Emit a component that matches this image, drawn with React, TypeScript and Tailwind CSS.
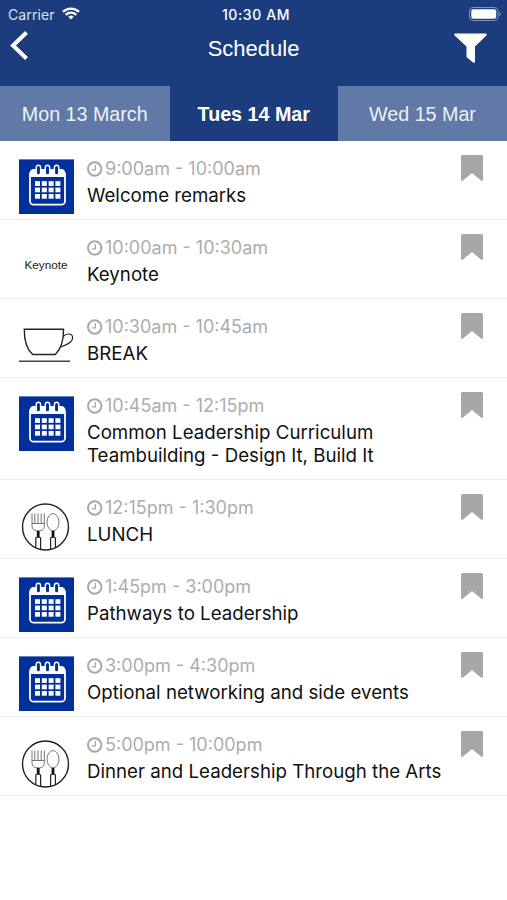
import { useState } from "react";

type IconKind = "calendar" | "keynote" | "cup" | "meal";

interface Session {
  icon: IconKind;
  time: string;
  title: string[];
}

const days = [
  { label: "Mon 13 March", width: "w-[169.5px]" },
  { label: "Tues 14 Mar", width: "w-[168.5px]" },
  { label: "Wed 15 Mar", width: "w-[169px]" },
];

const sessions: Session[] = [
  { icon: "calendar", time: "9:00am - 10:00am", title: ["Welcome remarks"] },
  { icon: "keynote", time: "10:00am - 10:30am", title: ["Keynote"] },
  { icon: "cup", time: "10:30am - 10:45am", title: ["BREAK"] },
  {
    icon: "calendar",
    time: "10:45am - 12:15pm",
    title: ["Common Leadership Curriculum", "Teambuilding - Design It, Build It"],
  },
  { icon: "meal", time: "12:15pm - 1:30pm", title: ["LUNCH"] },
  { icon: "calendar", time: "1:45pm - 3:00pm", title: ["Pathways to Leadership"] },
  { icon: "calendar", time: "3:00pm - 4:30pm", title: ["Optional networking and side events"] },
  { icon: "meal", time: "5:00pm - 10:00pm", title: ["Dinner and Leadership Through the Arts"] },
];

const CalendarIcon = () => (
  <svg viewBox="0 0 55 55" className="w-[55px] h-[55px]">
    <rect y=".4" width="55" height="55" fill="#02309a" />
    <rect x="11" y="11.5" width="35" height="34.2" rx="3.8" fill="none" stroke="#fff" strokeWidth="1.8" />
    <path d="M11 18v-4a4 4 0 0 1 4-4h27a4 4 0 0 1 4 4v4z" fill="#fff" />
    {[19.4, 28.5, 37.6].map((x) => (
      <rect key={x} x={x - 2.2} y="6.2" width="4.4" height="9.8" rx="2.2" fill="#02309a" stroke="#fff" strokeWidth="1.4" />
    ))}
    {[22.2, 28.6, 35].map((y) =>
      [16, 22.8, 29.6, 36.4].map((x) => <rect key={`${x}-${y}`} x={x} y={y} width="5" height="4.7" fill="#fff" />)
    )}
  </svg>
);

const CupIcon = () => (
  <svg viewBox="0 0 55 55" className="w-[55px] h-[55px]" fill="none" stroke="#222">
    <path d="M5.3 12.2h39.2c.2 9.5-2.2 19.5-8.2 25.3h-22.5c-6-5-8.6-14.8-8.5-25.3z" strokeWidth="1.4" />
    <path d="M44 19.5c3-3.2 9-3.7 9.7.8c.5 4.7-7.2 8.2-12.5 10" strokeWidth="1.2" />
    <path d="M0 44.2h51" stroke="#444" strokeWidth="1.6" />
  </svg>
);

const MealIcon = () => (
  <svg viewBox="0 0 55 55" className="w-[55px] h-[55px]" fill="none" stroke="#222">
    <circle cx="26.5" cy="29" r="23" strokeWidth="1.4" />
    <path
      d="M13 15.5v12.500c0 3.500 2.500 4.500 4.800 4.800h3c2.500-.3 4.500-1.500 4.500-4.800V15.500M15.800 15.500v10M19 15.500v10M22.200 15.500v10M13 25.500h12.300"
      stroke="#666"
      strokeWidth=".9"
    />
    <ellipse cx="34" cy="24.2" rx="6" ry="8.6" stroke="#666" strokeWidth=".9" />
    <path d="M19.2 33v6.5M34 33v6.5" stroke="#111" strokeWidth="2.8" />
    <path d="M16.800 49.500V40q2.400-2 4.800 0V51.500M31.600 51.500V40q2.400-2 4.800 0V49.500" strokeWidth="1.2" />
  </svg>
);

const SessionIcon = ({ kind }: { kind: IconKind }) => {
  if (kind === "calendar") return <CalendarIcon />;
  if (kind === "cup") return <CupIcon />;
  if (kind === "meal") return <MealIcon />;
  return <span className="w-[54px] pt-[17px] text-center text-[11.7px] leading-5 text-[#222]">Keynote</span>;
};

const ClockIcon = () => (
  <svg viewBox="0 0 16 16" className="w-4 h-4 shrink-0" fill="none" stroke="#a9a9a9">
    <circle cx="7.7" cy="8" r="6.7" strokeWidth="2" />
    <path d="M8.4 4v4.8H4.8" strokeWidth="1.3" />
  </svg>
);

const SessionRow = ({ session }: { session: Session }) => (
  <li className="flex border-b border-[#efefef] pl-[19px] pr-6">
    <div className="flex w-[68px] shrink-0 pt-[18px] font-['Liberation_Sans',sans-serif]">
      <SessionIcon kind={session.icon} />
    </div>
    <div className="grow pt-[15px] pb-3">
      <div className="mb-[3px] flex h-[25px] items-center gap-[2px] text-[18px] text-[#adadad]">
        <ClockIcon />
        <span className="whitespace-nowrap">{session.time}</span>
      </div>
      {session.title.map((line) => (
        <div key={line} className="h-[23px] whitespace-nowrap text-[18.7px] leading-[23px] text-[#111]">
          {line}
        </div>
      ))}
    </div>
    <button className="h-[26px] w-[22px] mt-[14px] shrink-0" aria-label="Bookmark">
      <svg viewBox="0 0 22 26" className="h-[26px] w-[22px]" fill="#a7a7a7">
        <path d="M1.500 0h19a1.500 1.500 0 0 1 1.500 1.500v23.500q-.5 1.500-2 .500L11 18l-9 7.500q-1.500 1-2-.500V1.500A1.500 1.500 0 0 1 1.500 0z" />
      </svg>
    </button>
  </li>
);

const App = () => {
  const [active, setActive] = useState(1);

  return (
    <div className="min-h-[900px] w-[507px] overflow-hidden bg-white font-['Inter',sans-serif]">
      <header className="bg-[#1b3d7d] text-white">
        <div className="grid h-7 grid-cols-3 items-center pl-2 pr-[6px] text-[14px]">
          <div className="flex items-center gap-[7px] text-[#dbe3f1]">
            <span className="tracking-[0.1px]">Carrier</span>
            <svg viewBox="0 0 18 13" className="mb-[2px] h-[13px] w-[18px]" fill="none" stroke="#fff" strokeWidth="2.3">
              <path d="M1 4.8a11.5 11.5 0 0 1 16 0M3.8 7.8a7.5 7.5 0 0 1 10.4 0" />
              <path d="M9 12.5L6.3 9.8a4 4 0 0 1 5.4 0z" fill="#fff" stroke="none" />
            </svg>
          </div>
          <div className="whitespace-nowrap pl-[3px] text-center font-medium tracking-[0.6px]">10:30 AM</div>
          <svg viewBox="0 0 32 14" className="mb-px h-[14px] w-8 justify-self-end">
            <rect x=".5" y=".5" width="28.5" height="13" rx="3.5" fill="none" stroke="#7f93b8" />
            <rect x="2.2" y="2.2" width="25" height="9.6" rx="2" fill="#fff" />
            <path d="M30.3 5v4q1.5-.7 1.5-2t-1.5-2z" fill="#7f93b8" />
          </svg>
        </div>
        <div className="grid h-[58px] grid-cols-[1fr_auto_1fr] items-start pl-[9px] pr-5 font-['Liberation_Sans',sans-serif]">
          <button aria-label="Back" className="mt-[3px] w-8">
            <svg viewBox="0 0 20 29" className="h-[29px] w-5" fill="none" stroke="#fff" strokeWidth="4">
              <path d="M17.5 1.500L4 14.500L17.500 27.500" />
            </svg>
          </button>
          <h1 className="mt-2 pl-[11px] text-[22px] leading-[26px]">Schedule</h1>
          <button aria-label="Filter" className="mt-[5px] justify-self-end">
            <svg viewBox="0 0 33 30" className="h-[30px] w-[33px]" fill="#fff">
              <path d="M1 .5h31q1.200.8.400 2L21 13.500V29q-.8 1.200-2 .5l-6.500-5.500V13.500L.6 2.500Q-.2 1.300 1 .5z" />
            </svg>
          </button>
        </div>
        <nav className="flex h-[55px] font-['Liberation_Sans',sans-serif] text-[19.7px]">
          {days.map((day, i) => (
            <button
              key={day.label}
              onClick={() => setActive(i)}
              className={`${day.width} pt-[3px] ${i === active ? "font-bold text-white" : "bg-[#6079a6] text-[#eef2fa]"}`}
            >
              {day.label}
            </button>
          ))}
        </nav>
      </header>
      <ul>
        {sessions.map((session) => (
          <SessionRow key={session.time} session={session} />
        ))}
      </ul>
    </div>
  );
};

export default App;
